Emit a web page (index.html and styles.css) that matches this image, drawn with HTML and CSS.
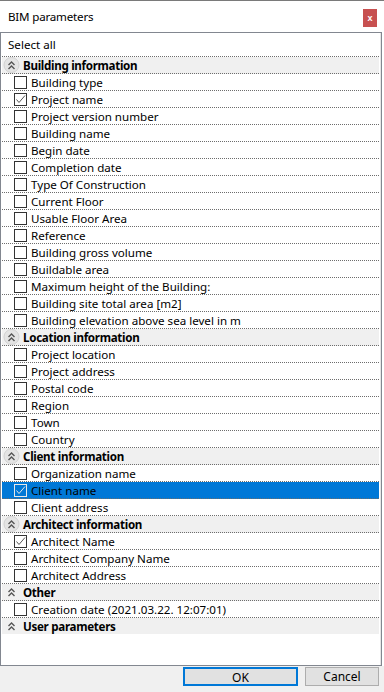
FILE: index.html
```html
<!DOCTYPE html>
<html lang="en">
<head>
  <meta charset="UTF-8">
  <title>BIM parameters</title>
  <meta name="viewport" content="width=device-width, initial-scale=1">
  <link rel="stylesheet" href="styles.css">
</head>
<body>
  <div class="window">
    <div class="titlebar">
      <span class="title">BIM parameters</span>
      <button class="close">x</button>
    </div>
    <div class="list" id="list">
      <div class="row select-all">Select all</div>
    </div>
    <div class="footer">
      <button class="btn btn-ok">OK</button>
      <button class="btn">Cancel</button>
    </div>
  </div>
  <script>
    const groups = [
      { name: 'Building information', hover: true, items: [
        ['Building type'], ['Project name', true], ['Project version number'],
        ['Building name'], ['Begin date'], ['Completion date'], ['Type Of Construction'],
        ['Current Floor'], ['Usable Floor Area'], ['Reference'], ['Building gross volume'],
        ['Buildable area'], ['Maximum height of the Building:'], ['Building site total area [m2]'],
        ['Building elevation above sea level in m']
      ]},
      { name: 'Location information', hover: true, items: [
        ['Project location'], ['Project address'], ['Postal code'], ['Region'], ['Town'], ['Country']
      ]},
      { name: 'Client information', hover: true, items: [
        ['Organization name'], ['Client name', true, true], ['Client address']
      ]},
      { name: 'Architect information', hover: true, items: [
        ['Architect Name', true], ['Architect Company Name'], ['Architect Address']
      ]},
      { name: 'Other', items: [['Creation date (2021.03.22. 12:07:01)']] },
      { name: 'User parameters', last: true, items: [] }
    ];

    const chevron = hover => `
      <svg class="toggle" width="17" height="16" viewBox="0 0 17 16">
        ${hover ? '<circle cx="8.5" cy="8" r="7.5" fill="#e4e4e4" stroke="#d2d2d2"/>' : ''}
        <polyline points="5.5,8 8.5,5 11.5,8" fill="none" stroke="#555" stroke-width="1.4"/>
        <polyline points="5.5,12 8.5,9 11.5,12" fill="none" stroke="#555" stroke-width="1.4"/>
      </svg>`;

    const check = `<svg class="tick" width="11" height="11" viewBox="0 0 11 11">
        <polyline points="1.5,5.5 4,8.5 10,1.5" fill="none" stroke-width="1"/>
      </svg>`;

    const list = document.getElementById('list');
    groups.forEach(g => {
      const head = document.createElement('div');
      head.className = 'row group' + (g.last ? ' last' : '');
      head.innerHTML = `${chevron(g.hover)}<span class="group-name">${g.name}</span>`;
      list.appendChild(head);
      g.items.forEach(([label, checked, selected]) => {
        const row = document.createElement('div');
        row.className = 'row item' + (selected ? ' selected' : '');
        row.innerHTML = `<span class="box">${checked ? check : ''}</span><span>${label}</span>`;
        list.appendChild(row);
      });
    });
  </script>
</body>
</html>
```

FILE: styles.css
```css
html, body {
  margin: 0;
  height: 100%;
}
body {
  font-family: "Noto Sans", "Liberation Sans", sans-serif;
  font-size: 11.6px;
  color: #000;
  background: #fff;
}
.window {
  height: 692px;
  display: flex;
  flex-direction: column;
  box-sizing: border-box;
  border-top: 1px solid #7a7a7a;
  overflow: hidden;
}
.titlebar {
  height: 31px;
  display: flex;
  align-items: center;
  justify-content: space-between;
  padding: 0 7px 0 8px;
  background: #fff;
}
.title {
  margin-top: -1px;
  letter-spacing: -0.2px;
}
.close {
  width: 14px;
  height: 18px;
  margin-top: 2px;
  padding: 0;
  border: none;
  background: #c75050;
  color: #fff;
  font: bold 9px "Liberation Sans", sans-serif;
}
.list {
  flex: 1;
  margin-right: 2px;
  border: 1px solid #828790;
  padding: 0 1px;
  background: #fff;
  position: relative;
}
.list::after {
  content: "";
  position: absolute;
  top: 0;
  bottom: 0;
  right: 0;
  width: 1px;
  background: #e6e6e6;
}
.row {
  display: flex;
  align-items: center;
  height: 16px;
  border-bottom: 1px dotted #6d6d6d;
  margin-right: 1px;
  white-space: nowrap;
}
.select-all {
  height: 23px;
  padding-left: 6px;
}
.group {
  background: #f0f0f0;
  font-weight: bold;
  padding-left: 1px;
}
.group-name {
  letter-spacing: -0.3px;
}
.group.last {
  border-bottom: none;
}
.toggle {
  margin-right: 3px;
  flex: none;
}
.item {
  padding-left: 12px;
}
.box {
  width: 11px;
  height: 11px;
  border: 1px solid #333;
  margin-right: 4px;
  flex: none;
  display: flex;
  align-items: center;
  justify-content: center;
}
.tick {
  stroke: #555;
}
.selected {
  background: #0078d7;
}
.selected .box {
  border-color: #e8e8e8;
  background: transparent;
}
.selected .tick {
  stroke: #e8e8e8;
}
.footer {
  height: 26px;
  background: #f0f0f0;
  display: flex;
  justify-content: flex-end;
  align-items: flex-start;
  gap: 7px;
  padding: 1px 5px 0 0;
  box-sizing: border-box;
}
.btn {
  width: 74px;
  height: 19px;
  padding: 0;
  border: 1px solid #adadad;
  background: #e1e1e1;
  font: 12px "Noto Sans", "Liberation Sans", sans-serif;
  color: #000;
}
.btn-ok {
  width: 115px;
  border: 2px solid #0078d7;
}
```
